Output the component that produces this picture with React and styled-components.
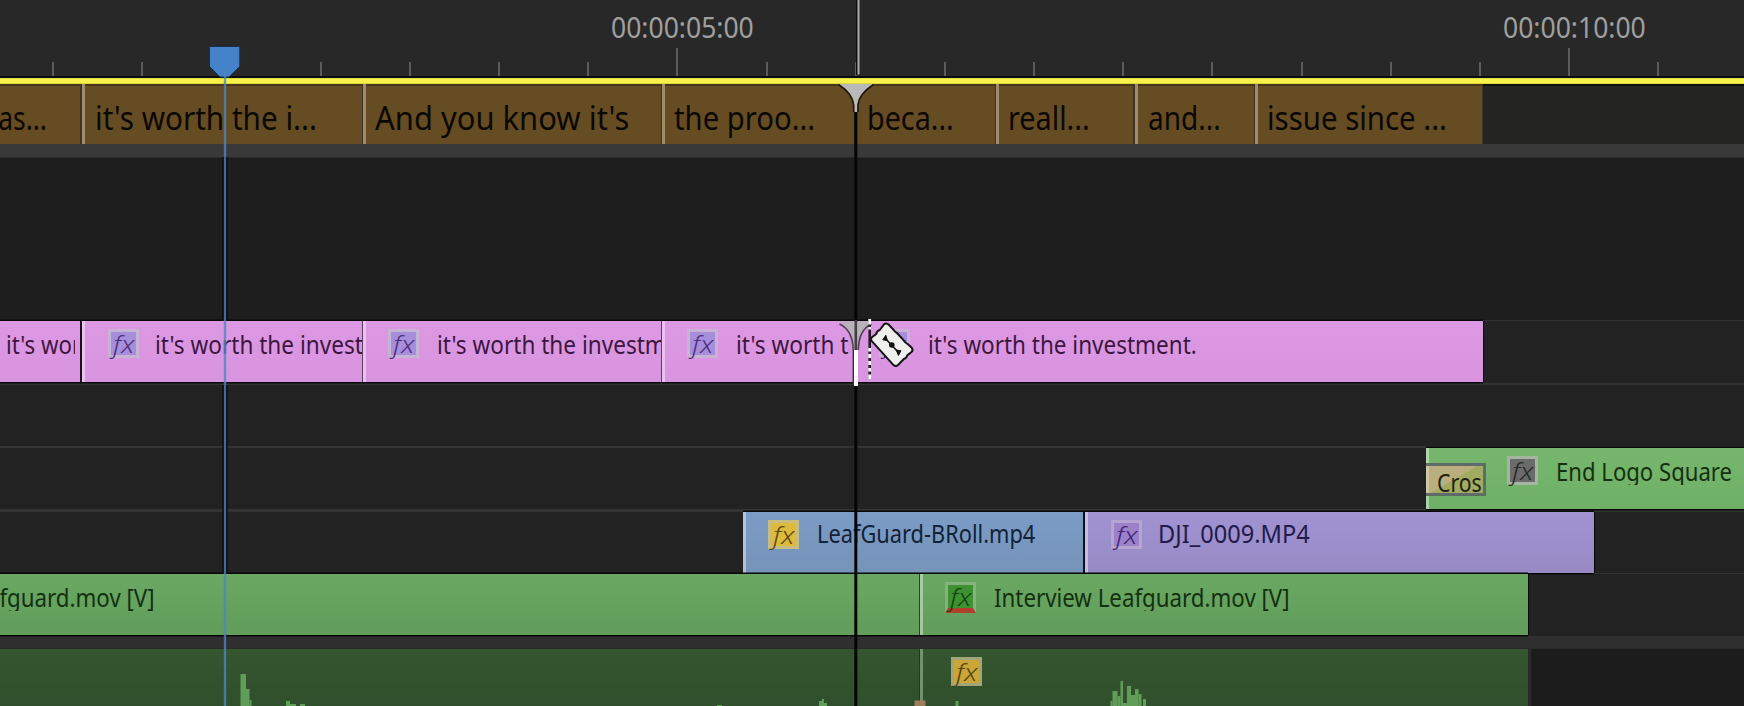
import { useLayoutEffect, useRef, useState } from "react";
import styled, { createGlobalStyle } from "styled-components";

const clipText = "it's worth the investment.";

const captions = [
  { text: "as...", width: 82, pad: -1, fit: 48, dark: 2 },
  { text: "it's worth the i...", width: 281, pad: 13, fit: 222 },
  { text: "And you know it's", width: 299, pad: 12, fit: 254 },
  { text: "the proo...", width: 193, pad: 12, fit: 141 },
  { text: "beca...", width: 141, pad: 12, fit: 87, first: true },
  { text: "reall...", width: 139, pad: 12, fit: 82, dark: 2 },
  { text: "and...", width: 120, pad: 13, fit: 73 },
  { text: "issue since ...", width: 228, pad: 12, fit: 180 },
];

// x, width and top of each bar of the audio wave
const wave = [
  [240.5, 5.5, 674], [246, 3.5, 689], [249.5, 2, 700],
  [286, 4, 701], [290, 6, 704], [300, 5, 704], [717, 5, 705],
  [819, 3, 701], [822, 2, 699], [824, 3, 703], [955.5, 3, 701],
  [1110.5, 2, 701], [1112.5, 5, 691], [1117.5, 3, 696], [1120.5, 2.5, 681],
  [1123, 4, 703], [1127, 4, 686], [1131, 4, 695], [1135, 3.5, 689],
  [1138.5, 3, 694], [1143, 3, 699],
];

export default function App() {
  return (
    <>
      <Global />
      <Timeline>
        <Ruler>
          <Timecodes>
            <Timecode><Fit width={142.5}>00:00:05:00</Fit></Timecode>
            <Timecode><Fit width={142.5}>00:00:10:00</Fit></Timecode>
          </Timecodes>
          <Ticks>
            {Array.from({ length: 19 }, (_, i) => (
              <Tick key={i} $major={i === 7 || i === 17} $off={i === 2} />
            ))}
          </Ticks>
        </Ruler>
        <WorkArea />
        <Captions>
          {captions.map((c) => (
            <Caption key={c.text} $width={c.width} $pad={c.pad} $dark={c.dark} $plain={c.first || c.pad < 0}>
              <Fit width={c.fit}>{c.text}</Fit>
            </Caption>
          ))}
        </Captions>
        <Divider $height={14} $color="#393939" />
        <Empty />

        <Track $height={62} $line={1}>
          <Clip $kind="pink" $width={82} $pad={6} $end="2px solid #1a0f1c" $plain>
            <Name $cut={69}><Fit width={266}>{clipText}</Fit></Name>
          </Clip>
          <Clip $kind="pink" $width={281} $pad={26} $end="1px solid #5b3f5e">
            <Fx kind="violet" />
            <Name $gap={16}><Fit width={270}>{clipText}</Fit></Name>
          </Clip>
          <Clip $kind="pink" $width={299} $pad={25} $end="1px solid #5b3f5e">
            <Fx kind="violet" />
            <Name $gap={18}><Fit width={270}>{clipText}</Fit></Name>
          </Clip>
          <Clip $kind="pink" $width={193} $pad={25}>
            <Fx kind="violet" />
            <Name $gap={18} $cut={114}><Fit width={270}>{clipText}</Fit></Name>
          </Clip>
          <Clip $kind="pink" $width={628} $pad={24} $plain>
            <Fx kind="violet" />
            <Name $gap={18}><Fit width={269}>{clipText}</Fit></Name>
          </Clip>
        </Track>
        <Track $height={61} $line={2} />
        <Track $height={61} $line={2} $start={1426}>
          <Clip $kind="lime" $width={318} $pad={0}>
            <Transition>
              <Fit width={45}>Cros</Fit>
            </Transition>
            <Spacer />
            <Fx kind="gray" />
            <Name $gap={18}><Fit width={176}>End Logo Square</Fit></Name>
          </Clip>
        </Track>
        <Track $height={61} $line={3} $start={743}>
          <Clip $kind="blue" $width={342} $pad={25} $end="2px solid #0d1118">
            <Fx kind="yellow" />
            <Name $gap={18} $up={2}><Fit width={218}>LeafGuard-BRoll.mp4</Fit></Name>
          </Clip>
          <Clip $kind="purple" $width={509} $pad={26}>
            <Fx kind="violet2" />
            <Name $gap={16} $up={2}><Fit width={152}>DJI_0009.MP4</Fit></Name>
          </Clip>
        </Track>
        <Track $height={62} $line={1}>
          <Clip $kind="green" $width={920} $pad={0} $end="1px solid #28442a" $plain>
            <Name $gap={-141}><Fit width={296}>Interview Leafguard.mov [V]</Fit></Name>
          </Clip>
          <Clip $kind="green" $width={608} $pad={25}>
            <Fx kind="green" />
            <Name $gap={18}><Fit width={296}>Interview Leafguard.mov [V]</Fit></Name>
          </Clip>
        </Track>
        <Divider $height={13} $color="#2f2f30" />
        <Audio>
          <AudioClip $width={920} />
          <AudioClip $width={608} $split>
            <Fx kind="yellow2" />
          </AudioClip>
        </Audio>

        <Overlay viewBox="0 0 1744 706">
          <g fill="#5f9d59">
            {wave.map(([x, w, y]) => (
              <rect key={x} x={x} y={y} width={w} height={706 - y} />
            ))}
          </g>
          <rect x="914.5" y="700.5" width="11" height="6" fill="#9d7d5c" />

          {/* snap lines on the edit point */}
          <rect x="856" y="0" width="1.5" height="75" fill="#0d0d0d" />
          <rect x="857.5" y="0" width="2" height="74.5" fill="#a9a9a9" />
          <rect x="854.3" y="110" width="3" height="596" fill="#050505" />
          <path d="M838.5 84H873.5C865 90 858 97 857.3 105V112H854.3V105C853.6 97 847 90 838.5 84Z" fill="#b9b9b9" />
          <path d="M838.5 84.5C847 90 853 97 853.6 105V112M873.5 84.5C865 90 858.6 97 858 105V112" fill="none" stroke="#1d1509" strokeWidth="1.5" />
          <path d="M840 321.5H872C864 327 858 335 858 350H853.5C853.5 335 848 327 840 321.5Z" fill="#b8b3b8" />
          <path d="M839.5 324C848 328 853 336 853.2 350M871.5 324C863 328 858.5 336 858.3 350" fill="none" stroke="#53405a" strokeWidth="1.6" />
          <rect x="854.5" y="320" width="2.6" height="30" fill="#454047" />
          <rect x="852.6" y="350" width="1.6" height="35" fill="#3a2a3c" />
          <rect x="854" y="350" width="4" height="36" fill="#fff" />

          {/* razor cursor */}
          <path d="M869.7 315V379" stroke="#241a26" strokeWidth="2.6" />
          <path d="M869.7 319V324.5M869.7 327V329.5M869.7 348V351.5M869.7 354V358M869.7 361V365M869.7 368V371.5M869.7 374.5V379" stroke="#fff" strokeWidth="2.8" />
          <path
            d="M883.8 324.6Q886.3 322.4 888.8 324.8L893.5 329.7Q894.7 331.8 897 333L903.5 340.2Q905.3 343 908.2 344.4L911.6 347.6Q913.6 350 911.5 352L907.3 355.4Q906.8 358.2 903.8 359L898.3 364.8Q895.8 367.2 893.3 364.8L871.8 341.2Q869.9 339 872.2 337L876.3 334Q876.8 330.8 879.8 330Z"
            fill="#efefee" stroke="#171319" strokeWidth="2" strokeLinejoin="round"
          />
          <path d="M884.5 337.5L899 353" stroke="#111" strokeWidth="1.6" />
          <path d="M882.8 339.8L885.8 335.2L887.4 340.6ZM901 350.8L898.4 355.4L896.2 350Z" fill="#111" stroke="#111" strokeWidth="1" strokeLinejoin="round" />
          <circle cx="891.8" cy="345" r="2.8" fill="#111" />

          {/* playhead */}
          <path d="M209.5 46.5H239.8V66.5L229 77H220L209.5 66.5Z" fill="#4482c9" stroke="#182f4c" strokeWidth="1" />
          <path d="M225 157V320M225 385V573" stroke="#050505" strokeWidth="5" />
          <rect x="223.8" y="70" width="2.4" height="636" fill="#4f86bb" opacity=".8" />
        </Overlay>
      </Timeline>
    </>
  );
}

// squeezes a line of text into the given width
function Fit({ width, children }) {
  const ref = useRef(null);
  const [scale, setScale] = useState(1);

  useLayoutEffect(() => {
    setScale(width / ref.current.offsetWidth);
  }, [width, children]);

  return (
    <FitText ref={ref} style={{ transform: `scaleX(${scale})` }}>
      {children}
    </FitText>
  );
}

function Fx({ kind }) {
  return (
    <FxBadge $kind={kind}>
      <Fit width={21}>fx</Fit>
    </FxBadge>
  );
}

const Global = createGlobalStyle`
  * {
    box-sizing: border-box;
  }
  body {
    margin: 0;
    background: #1e1e1e;
    overflow: hidden;
  }
`;

const Timeline = styled.main`
  position: relative;
  display: flex;
  flex-direction: column;
  width: 1744px;
  height: 706px;
  overflow: hidden;
  background: #1e1e1e;
  font-family: "Noto Sans", "Open Sans", sans-serif;
`;

const FitText = styled.span`
  display: inline-block;
  white-space: pre;
  transform-origin: 0 50%;
`;

const Ruler = styled.header`
  height: 78px;
  flex: none;
  background: #282828;
  border-bottom: 2px solid #0c0c14;
`;

const Timecodes = styled.div`
  display: flex;
  height: 48px;
  padding-left: 611px;
  gap: 749px;
`;

const Timecode = styled.div`
  flex: none;
  width: 143px;
  color: #9f9f9f;
  font-size: 28.5px;
  line-height: 54px;
`;

const Ticks = styled.div`
  display: flex;
  align-items: flex-end;
  height: 28px;
  padding-left: 52px;
`;

const Tick = styled.div`
  flex: none;
  width: 89.2px;
  height: ${(p) => (p.$major ? 28 : 14)}px;
  border-left: 2px solid ${(p) => (p.$off ? "transparent" : "#5c5c5c")};
`;

const WorkArea = styled.div`
  flex: none;
  height: 6px;
  background: linear-gradient(#d8d53c, #f6f24a 25%, #f6f24a 75%, #d0c83c);
`;

const Captions = styled.div`
  display: flex;
  flex: none;
  height: 60px;
  background: #242422;
  box-shadow: inset 0 2px #10100c;
`;

const Caption = styled.div`
  flex: none;
  width: ${(p) => p.$width}px;
  padding-left: ${(p) => Math.max(p.$pad, 0)}px;
  text-indent: ${(p) => Math.min(p.$pad, 0)}px;
  border-right: ${(p) => p.$dark || 1}px solid #3f3327;
  background: #664c22;
  box-shadow: inset ${(p) => (p.$plain ? 0 : 3)}px 0 #a08b6c, inset 0 2px #49361a;
  color: #0b0802;
  font-size: 33px;
  line-height: 68px;
  overflow: hidden;
`;

const Divider = styled.div`
  flex: none;
  height: ${(p) => p.$height}px;
  background: ${(p) => p.$color};
  border-bottom: 1px solid #2a2a2a;
`;

const Empty = styled.div`
  flex: none;
  height: 162px;
  background: #1e1e1e;
`;

const Track = styled.section`
  display: flex;
  flex: none;
  height: ${(p) => p.$height + p.$line}px;
  padding-left: ${(p) => p.$start || 0}px;
  border-top: ${(p) => p.$line}px solid #343434;
  background: #222;
`;

const clipColors = {
  pink: ["#dd98e4", "#d994e0", "#3c1640"],
  lime: ["#76b76d", "#6eb065", "#16300f"],
  blue: ["#7b9cc6", "#7693b8", "#122238"],
  purple: ["#a193d2", "#978ac4", "#221a4a"],
  green: ["#69a862", "#629d5b", "#143010"],
};

const Clip = styled.article`
  position: relative;
  display: flex;
  align-items: flex-start;
  flex: none;
  width: ${(p) => p.$width}px;
  height: 61px;
  padding-left: ${(p) => p.$pad}px;
  border-right: ${(p) => p.$end || "0"};
  background: linear-gradient(${(p) => clipColors[p.$kind][0]}, ${(p) => clipColors[p.$kind][1]});
  box-shadow: inset ${(p) => (p.$plain ? 0 : 3)}px 0 rgba(255, 255, 255, 0.42), 0 -1.5px #080808,
    0 1.5px #080808, 1px 0 #080808;
  color: ${(p) => clipColors[p.$kind][2]};
  overflow: hidden;
`;

const Name = styled.div`
  flex: none;
  width: ${(p) => p.$cut || 300}px;
  height: ${(p) => (p.$up ? 31 : 29)}px;
  margin: ${(p) => 8 - (p.$up || 0)}px 0 0 ${(p) => p.$gap || 0}px;
  font-size: 25px;
  line-height: 30px;
  overflow: hidden;
`;

const fxColors = {
  violet: ["#a78edb", "#c7b3d3", "#4c2f7e"],
  violet2: ["#9c80c8", "#b5a5d0", "#41267a"],
  gray: ["#6a6b6a", "#a5b5a1", "#282828"],
  yellow: ["#dcba3c", "#c9bc80", "#5e4614"],
  yellow2: ["#c9a637", "#a3a578", "#564210"],
  green: ["#3d9130", "#86b17f", "#134510"],
};

const FxBadge = styled.div`
  flex: none;
  width: 31px;
  height: ${(p) => (p.$kind === "green" ? 31 : 29)}px;
  margin-top: 8px;
  padding-left: 2px;
  background: ${(p) => fxColors[p.$kind][0]};
  border: 3px solid ${(p) => fxColors[p.$kind][1]};
  ${(p) => p.$kind === "green" && "border-bottom: 5px solid #b0402c;"}
  color: ${(p) => fxColors[p.$kind][2]};
  font-size: 24px;
  font-style: italic;
  font-weight: 300;
  line-height: 23px;
`;

const Transition = styled.div`
  flex: none;
  width: 60px;
  height: 33px;
  margin-top: 15px;
  padding-left: 11px;
  border: solid #5f6b66;
  border-width: 3px 3px 3px 0;
  background: linear-gradient(150deg, #b9ae7d 49%, #a1ab62 50%);
  box-shadow: inset 3px 0 rgba(255, 255, 255, 0.3);
  color: #22200f;
  font-size: 25px;
  line-height: 32px;
  overflow: hidden;
`;

const Spacer = styled.div`
  flex: none;
  width: 21px;
`;

const Audio = styled.section`
  display: flex;
  flex: 1;
  background: #1c1c1c;
`;

const AudioClip = styled.article`
  display: flex;
  flex: none;
  width: ${(p) => p.$width}px;
  padding-left: 31px;
  border-right: ${(p) => (p.$split ? 0 : 1)}px solid #233822;
  background: linear-gradient(#34562f, #304f2c);
  box-shadow: inset ${(p) => (p.$split ? 3 : 0)}px 0 #70936c, ${(p) => (p.$split ? 3 : 0)}px 0 #292929;
`;

const Overlay = styled.svg`
  position: absolute;
  inset: 0;
  width: 1744px;
  height: 706px;
  pointer-events: none;
`;
